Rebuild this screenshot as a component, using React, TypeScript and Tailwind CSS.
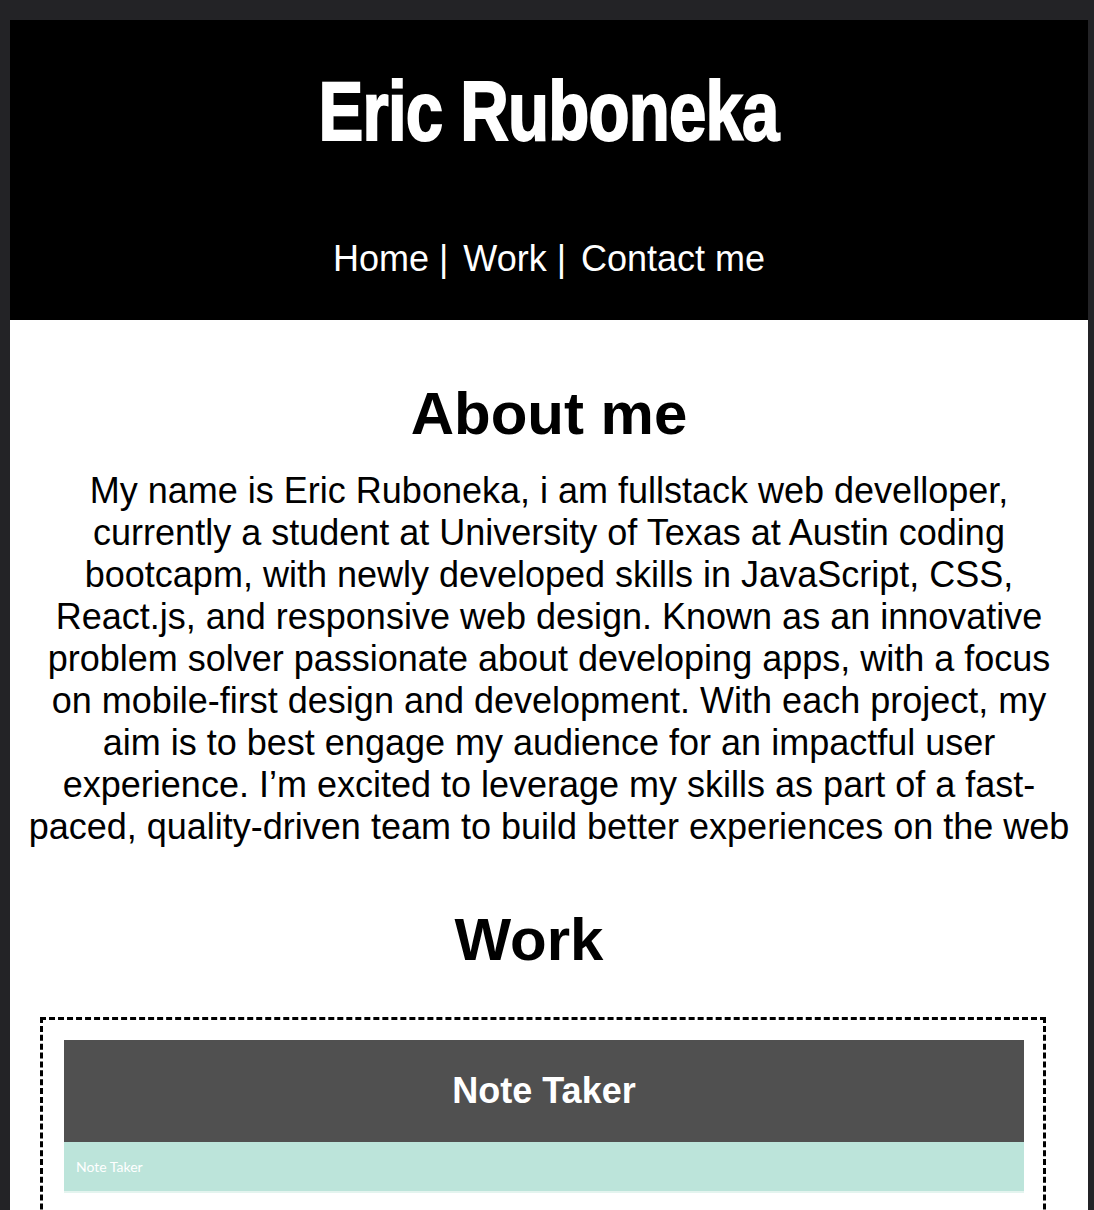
export default function App() {
  return (
    <div className="min-h-screen bg-[#232326] pt-[20px] pl-[10px] pr-[6px]" style={{ fontFamily: '"Liberation Sans", Arial, sans-serif' }}>
      <header className="bg-black h-[300px] flex flex-col items-center text-white">
        <h1 className="mt-[49px] text-[84px] leading-none font-bold tracking-[-1px] scale-x-[0.8] origin-center [-webkit-text-stroke:2px_white]">
          Eric Ruboneka
        </h1>
        <nav className="mt-[88px] text-[36px] leading-none flex gap-[15px]">
          <a>Home |</a>
          <a>Work |</a>
          <a>Contact me</a>
        </nav>
      </header>

      <main className="bg-white pb-10">
        <section className="px-[14px] pt-[64px] text-center">
          <h2 className="text-[60px] font-bold leading-none">About me</h2>
          <p className="mt-[26px] text-[36px] leading-[42px]">
            My name is Eric Ruboneka, i am fullstack web develloper, currently a student at University of Texas at Austin coding bootcapm, with newly developed skills in JavaScript, CSS, React.js, and responsive web design. Known as an innovative problem solver passionate about developing apps, with a focus on mobile-first design and development. With each project, my aim is to best engage my audience for an impactful user experience. I’m excited to leverage my skills as part of a fast-paced, quality-driven team to build better experiences on the web
          </p>
        </section>

        <section className="mt-[62px]">
          <h2 className="text-[60px] font-bold leading-none text-center pr-[40px]">Work</h2>
          <div className="mt-[47px] ml-[30px] mr-[42px] border-[3px] border-dashed border-black pl-[21px] pr-[19px] pt-[20px] pb-10">
            <div className="bg-[#505050] h-[102px] flex items-center justify-center">
              <h3 className="text-white text-[36px] font-bold">Note Taker</h3>
            </div>
            <div className="bg-[#bce4da] h-[51px] flex items-center px-[12px] border-b-2 border-[#e4f4ef]">
              <span className="text-white text-[14px]" style={{ fontFamily: 'Lato, sans-serif' }}>Note Taker</span>
            </div>
          </div>
        </section>
      </main>
    </div>
  );
}
